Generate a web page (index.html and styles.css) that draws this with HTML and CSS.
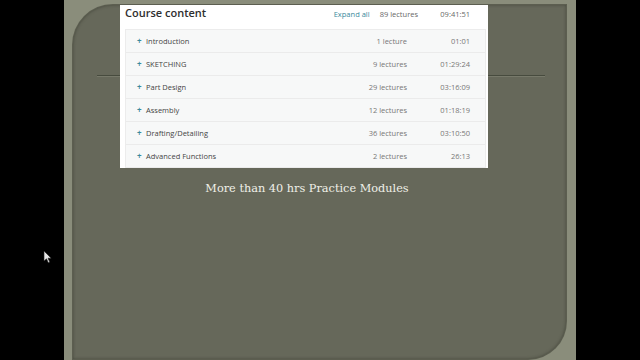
FILE: index.html
```html
<!DOCTYPE html>
<html>
<head>
<meta charset="utf-8">
<link rel="stylesheet" href="styles.css">
</head>
<body>
<div class="slide">
  <div class="panel">
    <div class="stage">
      <div class="rule"></div>
      <div class="card">
        <div class="card-head">
          <div class="title">Course content</div>
          <div class="expand">Expand all</div>
          <div class="total">89 lectures</div>
          <div class="total-time">09:41:51</div>
        </div>
        <div class="rows">
          <div class="row"><span class="plus">+</span><span class="name">Introduction</span><span class="count">1 lecture</span><span class="time">01:01</span></div>
          <div class="row"><span class="plus">+</span><span class="name">SKETCHING</span><span class="count">9 lectures</span><span class="time">01:29:24</span></div>
          <div class="row"><span class="plus">+</span><span class="name">Part Design</span><span class="count">29 lectures</span><span class="time">03:16:09</span></div>
          <div class="row"><span class="plus">+</span><span class="name">Assembly</span><span class="count">12 lectures</span><span class="time">01:18:19</span></div>
          <div class="row"><span class="plus">+</span><span class="name">Drafting/Detailing</span><span class="count">36 lectures</span><span class="time">03:10:50</span></div>
          <div class="row"><span class="plus">+</span><span class="name">Advanced Functions</span><span class="count">2 lectures</span><span class="time">26:13</span></div>
        </div>
      </div>
    </div>
    <div class="caption">More than 40 hrs Practice Modules</div>
  </div>
</div>
<svg class="cursor" width="9" height="14" viewBox="0 0 9 14"><path d="M1 1 L1 11 L3.5 8.8 L5.3 12.8 L6.8 12.1 L5 8.2 L8.2 8.2 Z" fill="#e6e6e6" stroke="#222" stroke-width="0.6"/></svg>
</body>
</html>
```
FILE: styles.css
```css
html, body {
  margin: 0;
  padding: 0;
}
body {
  width: 640px;
  height: 360px;
  background: #000;
  display: flex;
  justify-content: center;
  overflow: hidden;
  position: relative;
}
.slide {
  width: 512px;
  height: 360px;
  box-sizing: border-box;
  padding: 5px 10px 1px 9px;
  background: #8a8d7b;
}
.panel {
  height: 100%;
  background: #66685a;
  border-radius: 40px 0 38px 0;
  box-shadow: 0 0 0 1px #5c5e50, inset 0 0 3px rgba(40, 42, 32, 0.5);
}
.stage {
  display: grid;
}
.rule, .card {
  grid-area: 1 / 1;
}
.rule {
  align-self: start;
  margin-top: 70px;
  margin-left: 24px;
  width: 448px;
  height: 1px;
  background: #474b3e;
  border-bottom: 1px solid #77796a;
}
.card {
  margin-left: 47px;
  width: 368px;
  background: #fff;
  box-sizing: border-box;
  padding: 0 2px 0 5px;
  font-family: "Open Sans", "DejaVu Sans", sans-serif;
}
.card-head {
  display: flex;
  align-items: flex-start;
  height: 24px;
  padding: 0 16px 0 0;
  box-sizing: border-box;
}
.title {
  flex: 1;
  font-size: 11px;
  font-weight: 600;
  line-height: 15px;
  color: #2e2e2e;
}
.expand, .total, .total-time {
  font-size: 7.5px;
  line-height: 12px;
  margin-top: 3px;
}
.expand {
  color: #3a8a9c;
  margin-right: 10px;
}
.total {
  color: #686868;
}
.total-time {
  color: #686868;
  width: 52px;
  text-align: right;
}
.rows {
  background: #f7f8f8;
  border: 1px solid #ececec;
  border-bottom: none;
}
.row {
  display: flex;
  align-items: center;
  height: 22px;
  padding: 0 15px 1px 11px;
  box-sizing: content-box;
  border-bottom: 1px solid #ebebeb;
  font-size: 7.5px;
  color: #585858;
}
.row {
  height: 21px;
}
.plus {
  width: 9px;
  color: #3a8a9c;
  font-weight: 700;
  font-size: 8px;
}
.name {
  flex: 1;
  color: #444;
}
.count {
  width: 70px;
  text-align: right;
  color: #777;
}
.time {
  width: 63px;
  text-align: right;
  color: #777;
}
.caption {
  margin-left: 47px;
  width: 368px;
  padding-left: 6px;
  box-sizing: border-box;
  margin-top: 14px;
  text-align: center;
  font-family: "DejaVu Serif", serif;
  font-size: 11.3px;
  line-height: 14px;
  color: #f0f0e8;
}
.cursor {
  position: absolute;
  left: 43px;
  top: 250px;
}
```
